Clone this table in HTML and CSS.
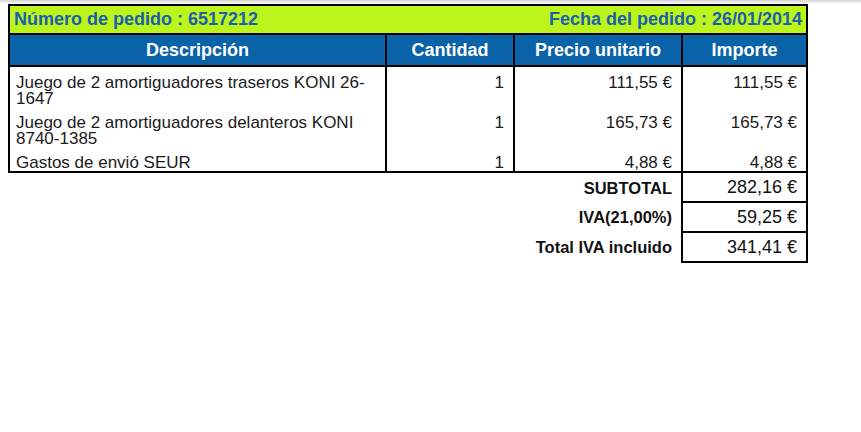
FILE: index.html
```html
<!DOCTYPE html>
<html lang="es">
<head>
<meta charset="utf-8">
<link rel="stylesheet" href="styles.css">
<title>Pedido 6517212</title>
</head>
<body>
<div class="topbar"></div>
<div class="page">
  <table class="order">
    <colgroup>
      <col class="c-desc"><col class="c-qty"><col class="c-unit"><col class="c-total">
    </colgroup>
    <tr class="title-row">
      <td colspan="2" class="title-left">Número de pedido : 6517212</td>
      <td colspan="2" class="title-right">Fecha del pedido : 26/01/2014</td>
    </tr>
    <tr class="head">
      <th>Descripción</th><th>Cantidad</th><th>Precio unitario</th><th>Importe</th>
    </tr>
    <tr class="item">
      <td class="desc">Juego de 2 amortiguadores traseros KONI 26-1647</td>
      <td class="num">1</td><td class="num">111,55 €</td><td class="num">111,55 €</td>
    </tr>
    <tr class="item">
      <td class="desc">Juego de 2 amortiguadores delanteros KONI 8740-1385</td>
      <td class="num">1</td><td class="num">165,73 €</td><td class="num">165,73 €</td>
    </tr>
    <tr class="item item-last">
      <td class="desc">Gastos de envió SEUR</td>
      <td class="num">1</td><td class="num">4,88 €</td><td class="num">4,88 €</td>
    </tr>
    <tr class="sum">
      <td colspan="3" class="label">SUBTOTAL</td><td class="value">282,16 €</td>
    </tr>
    <tr class="sum">
      <td colspan="3" class="label">IVA(21,00%)</td><td class="value">59,25 €</td>
    </tr>
    <tr class="sum">
      <td colspan="3" class="label">Total IVA incluido</td><td class="value">341,41 €</td>
    </tr>
  </table>
</div>
</body>
</html>
```
FILE: styles.css
```css
html, body {
  margin: 0;
  padding: 0;
  background: #fff;
  font-family: "Liberation Sans", Arial, sans-serif;
}
.topbar {
  height: 3px;
  background: linear-gradient(#d6d6d6, #f2f2f2);
}
.page {
  padding: 1px 0 0 8px;
}
.order {
  border-collapse: collapse;
  table-layout: fixed;
  width: 798px;
}
.c-desc { width: 377px; }
.c-qty { width: 128px; }
.c-unit { width: 168px; }
.c-total { width: 125px; }

.title-row td {
  background: #bcf51b;
  color: #1b5fae;
  font-weight: bold;
  font-size: 18px;
  height: 27px;
  padding: 0 4px;
  border-top: 2px solid #000;
  border-bottom: 2px solid #000;
}
.title-left { border-left: 2px solid #000; text-align: left; }
.title-right { border-right: 2px solid #000; text-align: right; }

.head th {
  background: #0a63a8;
  color: #fff;
  font-weight: bold;
  font-size: 18px;
  height: 30px;
  padding: 0;
  text-align: center;
  border: 2px solid #000;
}

.item td {
  font-size: 17px;
  line-height: 16px;
  color: #1a1a1a;
  vertical-align: top;
  padding: 8px 9px 0 6px;
  border-left: 2px solid #000;
  border-right: 2px solid #000;
}
.item-last td { border-bottom: 2px solid #000; }
.item .num { text-align: right; }
.item .desc { padding-right: 20px; }

.sum td {
  height: 27px;
  padding: 1px 9px 0 6px;
  text-align: right;
  color: #111;
}
.sum .label {
  font-weight: bold;
  font-size: 16.5px;
  border: none;
}
.sum .value {
  font-size: 18px;
  border-left: 2px solid #000;
  border-right: 2px solid #000;
  border-bottom: 2px solid #000;
}
```
